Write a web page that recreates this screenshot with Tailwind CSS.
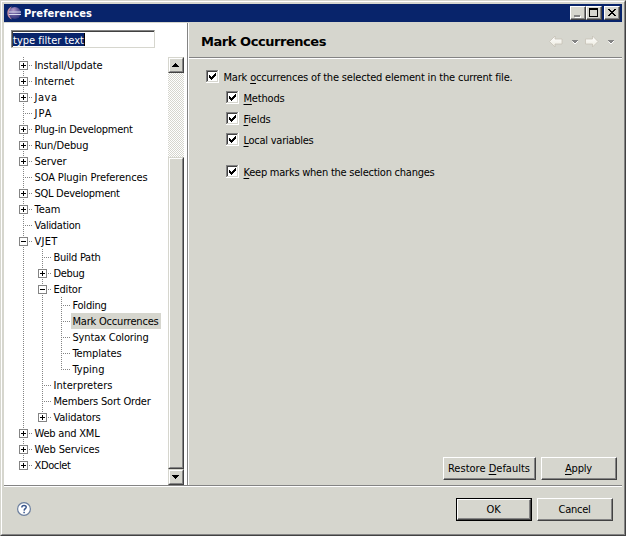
<!DOCTYPE html>
<html lang="en">
<head>
<meta charset="utf-8">
<title>Preferences</title>
<script src="https://cdn.jsdelivr.net/npm/@tailwindcss/browser@4"></script>
</head>
<body class="overflow-hidden">
<div class="w-[626px] h-[536px] border border-t-[#d6d6ce] border-l-[#d6d6ce] border-r-[#424242] border-b-[#424242] bg-[#d6d6ce] font-['DejaVu_Sans_Condensed','DejaVu_Sans',sans-serif] [font-stretch:condensed] text-[11px] leading-4 text-black whitespace-nowrap">
<div class="h-full border border-t-white border-l-white border-r-[#848484] border-b-[#848484] p-[2px] flex flex-col">

  <header class="h-[18px] shrink-0 bg-[#08246b] text-white flex items-center pl-[3px] pr-[2px]">
    <svg class="w-[14px] h-[14px] mr-[3px] shrink-0" viewBox="0 0 14 14">
      <defs><radialGradient id="orb" cx=".38" cy=".25" r=".8"><stop offset="0" stop-color="#b39cc8"/><stop offset=".45" stop-color="#6c609f"/><stop offset="1" stop-color="#2c2f78"/></radialGradient></defs>
      <path d="M5 .5C2 1.500.3 4 .3 7S2 12.500 5 13.500C3.400 11.500 2.700 9.500 2.700 7S3.400 2.500 5 .5Z" fill="#c98f9f"/>
      <circle cx="7.800" cy="7" r="6.100" fill="url(#orb)"/>
      <path d="M1.800 6h12.200M1.800 8.500h12.200" stroke="#d9dcf0" stroke-width="1"/>
    </svg>
    <span class="font-bold pt-px" data-w="68" data-font="bold 11px 'DejaVu Sans Condensed'">Preferences</span>
    <div class="ml-auto flex">
      <div class="w-4 h-[14px] bg-[#d6d6ce] border border-t-white border-l-white border-r-[#424242] border-b-[#424242]"><svg class="w-[14px] h-3 block" viewBox="0 0 14 12" shape-rendering="crispEdges"><path d="M13.500 0v11.500H0" fill="none" stroke="#848484"/><path d="M4 9h6v2H4z" fill="#fff"/><path d="M3 8h6v2H3z" fill="#848484"/></svg></div>
      <div class="w-4 h-[14px] bg-[#d6d6ce] border border-t-white border-l-white border-r-[#424242] border-b-[#424242]"><svg class="w-[14px] h-3 block" viewBox="0 0 14 12" shape-rendering="crispEdges"><path d="M13.500 0v11.500H0" fill="none" stroke="#848484"/><path d="M2 1h9v9H2zM3 3v6h7V3z" fill="#000" fill-rule="evenodd"/></svg></div>
      <div class="ml-[2px] w-4 h-[14px] bg-[#d6d6ce] border border-t-white border-l-white border-r-[#424242] border-b-[#424242]"><svg class="w-[14px] h-3 block" viewBox="0 0 14 12" shape-rendering="crispEdges"><path d="M13.500 0v11.500H0" fill="none" stroke="#848484"/><path d="M3 2h2v1h1v1h2V3h1V2h2v1h-1v1H9v1H8v1h1v1h1v1h1v1H9V8H8V7H6v1H5v1H3V8h1V7h1V6h1V5H5V4H4V3H3z" fill="#000"/></svg></div>
    </div>
  </header>

  <main class="mt-px h-[462px] shrink-0 flex">
    <aside class="w-[183px] bg-white pl-[7px] pt-[7px] flex flex-col shrink-0">
      <div class="w-[144px] h-[18px] shrink-0 border border-t-[#848484] border-l-[#848484] border-r-[#d6d6ce] border-b-[#d6d6ce]">
        <div class="h-full border-t border-l border-[#424242] pt-px flex">
          <div class="h-[13px] w-[72px] bg-[#08246b] border-r border-black text-white leading-[15px]"><span data-w="71">type filter text</span></div>
        </div>
      </div>
      <div class="mt-[9px] flex h-[428px]">
        <div id="tree" class="w-[157px]"></div>
        <div class="w-4 flex flex-col bg-[#ebebe7] bg-[repeating-conic-gradient(#d6d6ce_0_25%,#ffffff_0_50%)] bg-[length:2px_2px]">
          <div class="h-4 bg-[#d6d6ce] border border-t-[#d6d6ce] border-l-[#d6d6ce] border-r-[#424242] border-b-[#424242]"><div class="h-full border border-t-white border-l-white border-r-[#848484] border-b-[#848484]"><svg class="w-3 h-3 block" viewBox="0 0 12 12" shape-rendering="crispEdges"><path d="M5 4h1v1h1v1h1v1h1v1H2V7h1V6h1V5h1z"/></svg></div></div>
          <div class="mt-[84px] h-[312px] bg-[#d6d6ce] border border-t-[#d6d6ce] border-l-[#d6d6ce] border-r-[#424242] border-b-[#424242]"><div class="h-full border border-t-white border-l-white border-r-[#848484] border-b-[#848484]"></div></div>
          <div class="h-4 bg-[#d6d6ce] border border-t-[#d6d6ce] border-l-[#d6d6ce] border-r-[#424242] border-b-[#424242]"><div class="h-full border border-t-white border-l-white border-r-[#848484] border-b-[#848484]"><svg class="w-3 h-3 block" viewBox="0 0 12 12" shape-rendering="crispEdges"><path d="M2 4h7v1H8v1H7v1H6v1H5V7H4V6H3V5H2z"/></svg></div></div>
        </div>
      </div>
    </aside>
    <div class="w-[2px] shrink-0 bg-[#848484] border-r border-white"></div>

    <section class="flex-1 flex flex-col">
      <div class="h-[35px] shrink-0 border-b border-[#848484] flex items-center pl-[12px] pr-[8px]">
        <h1 class="font-bold text-[13px] font-['DejaVu_Sans',sans-serif] [font-stretch:normal] pt-[3px]" data-w="125" data-font="bold 13px 'DejaVu Sans'">Mark Occurrences</h1>
        <svg class="ml-auto w-[66px] h-[14px] mt-1" viewBox="0 0 66 14">
          <defs><linearGradient id="pale" x2="0" y2="1"><stop stop-color="#fff"/><stop offset="1" stop-color="#eceade"/></linearGradient></defs>
          <path d="M1.500 6.500 7 1v3h7v5H7v3z" fill="url(#pale)" stroke="#c6c2b6" stroke-width=".8"/>
          <path d="M25 6h5v1h-1v1h-1v1h-2V8h-1V7h-1z" fill="#fff"/>
          <path d="M24 5h6v1h-1v1h-1v1h-2V7h-1V6h-1z" fill="#848484"/>
          <path d="M50 6.500 44.500 1v3h-7v5h7v3z" fill="url(#pale)" stroke="#c6c2b6" stroke-width=".8"/>
          <path d="M61 6h5v1h-1v1h-1v1h-2V8h-1V7h-1z" fill="#fff"/>
          <path d="M60 5h6v1h-1v1h-1v1h-2V7h-1V6h-1z" fill="#848484"/>
        </svg>
      </div>
      <div class="border-t border-white pt-[11px] pl-[17px] flex-1 flex flex-col">
        <div id="checks"></div>
        <div class="mt-auto mb-[5px] mr-[5px] flex justify-end gap-[5px]">
          <button class="w-[93px] h-[23px] border border-t-white border-l-white border-r-[#424242] border-b-[#424242]"><span class="h-full border-r border-b border-[#848484] flex items-center justify-center pt-px"><span data-w="82">Restore <u class="underline-offset-2">D</u>efaults</span></span></button>
          <button class="w-[76px] h-[23px] border border-t-white border-l-white border-r-[#424242] border-b-[#424242]"><span class="h-full border-r border-b border-[#848484] flex items-center justify-center pt-px"><span data-w="27"><u class="underline-offset-2">A</u>pply</span></span></button>
        </div>
      </div>
    </section>
  </main>

  <footer class="flex-1 border-t border-[#848484]">
    <div class="h-full border-t border-white flex items-start pt-[11px] pl-[13px] pr-[9px]">
      <svg class="w-[14px] h-[14px] mt-[4px]" viewBox="0 0 14 14"><circle cx="7" cy="7" r="6.400" fill="#fff" stroke="#6b7f9e" stroke-width="1.200"/><path d="M4.800 5.500C4.800 2.700 9.300 2.800 9.200 5.200 9.100 6.700 7.200 6.700 7.100 8.600M7.100 9.800v1.500" fill="none" stroke="#39568c" stroke-width="1.500"/></svg>
      <div class="ml-auto flex gap-[5px]">
        <button class="w-[76px] h-[23px] border border-black"><span class="h-full border border-t-white border-l-white border-r-[#424242] border-b-[#424242] block"><span class="h-full border-r border-b border-[#848484] flex items-center justify-center pt-px"><span data-w="14">OK</span></span></span></button>
        <button class="w-[76px] h-[23px] border border-t-white border-l-white border-r-[#424242] border-b-[#424242]"><span class="h-full border-r border-b border-[#848484] flex items-center justify-center pt-px"><span data-w="32">Cancel</span></span></button>
      </div>
    </div>
  </footer>
</div>
</div>
<script>
// level, marker (+ collapsed, - expanded, blank leaf), label, label width
const nodes = [
  [0,'+','Install/Update',68],[0,'+','Internet',40],[0,'+','Java',23],[0,' ','JPA',18],
  [0,'+','Plug-in Development',98],[0,'+','Run/Debug',54],[0,'+','Server',32],
  [0,' ','SOA Plugin Preferences',113],[0,'+','SQL Development',85],[0,'+','Team',26],
  [0,' ','Validation',46],[0,'-','VJET',23],[1,' ','Build Path',47],[1,'+','Debug',31],
  [1,'-','Editor',28],[2,' ','Folding',34],[2,' ','Mark Occurrences',86],[2,' ','Syntax Coloring',76],
  [2,' ','Templates',49],[2,' ','Typing',32],[1,' ','Interpreters',59],[1,' ','Members Sort Order',97],
  [1,'+','Validators',47],[0,'+','Web and XML',65],[0,'+','Web Services',65],[0,'+','XDoclet',36]];
document.getElementById('tree').innerHTML = nodes.map(([level, mark, label, w], i) => {
  let dots = '';
  for (let l = 0; l <= level; l++) {
    const x = 12 + 19 * l;
    let more = false;
    for (let j = i + 1; j < nodes.length && nodes[j][0] >= l; j++) if (nodes[j][0] === l) { more = true; break; }
    if (l < level && !more) continue;
    dots += `<path d="M${x}.5 0V${more ? 16 : 9}"/>`;
  }
  const c = 12 + 19 * level, end = c + 9;
  dots += `<path d="M${c} 8.500H${end}"/>`;
  const box = mark === ' ' ? '' : `<path d="M${c-3.5} 4.500h8v8h-8z" fill="#fff" stroke="#848484" stroke-dasharray="none"/><path d="M${c-2} 8.500h5${mark === '+' ? `M${c}.5 6v5` : ''}" stroke="#000" stroke-dasharray="none"/>`;
  return `<div class="h-4 flex"><svg class="h-4 shrink-0" style="width:${end}px" shape-rendering="crispEdges" fill="none" stroke="#848484" stroke-dasharray="1 1">${dots}${box}</svg><span class="${i === 16 ? 'bg-[#d6d6ce] pl-[1.5px] w-[90px] ml-px pt-px' : 'pl-[1.5px] ml-px pt-px'}"><span data-w="${w}">${label}</span></span></div>`;
}).join('');

const checks = [
  ['h-[21px]','Mark <u class="underline-offset-2">o</u>ccurrences of the selected element in the current file.',289],
  ['h-[21px] pl-5','<u class="underline-offset-2">M</u>ethods',41],
  ['h-[21px] pl-5','<u class="underline-offset-2">F</u>ields',27],
  ['h-[32px] pl-5','<u class="underline-offset-2">L</u>ocal variables',70],
  ['h-[21px] pl-5','<u class="underline-offset-2">K</u>eep marks when the selection changes',191]];
document.getElementById('checks').innerHTML = checks.map(([cls, label, w]) =>
  `<div class="flex items-start ${cls}"><svg class="w-[13px] h-[13px] mr-[4.5px] shrink-0" viewBox="0 0 13 13" shape-rendering="crispEdges"><path d="M0 0h13v13H0z" fill="#fff"/><path d="M.5 12V.5H12" fill="none" stroke="#848484"/><path d="M1.500 11V1.500H11" fill="none" stroke="#424242"/><path d="M1 11.500h10.500V1" fill="none" stroke="#d6d6ce"/><path d="M3 5h1v1h1v1h1V6h1V5h1V4h1V3h1v3H9v1H8v1H7v1H6v1H5V9H4V8H3z"/></svg><span data-w="${w}">${label}</span></div>`).join('');

// Letter spacing brings each label to its nominal width
const ctx = document.createElement('canvas').getContext('2d');
document.querySelectorAll('[data-w]').forEach(el => {
  ctx.font = el.dataset.font || "11px 'DejaVu Sans Condensed'";
  const text = el.textContent;
  el.style.letterSpacing = ((+el.dataset.w - ctx.measureText(text).width) / text.length) + 'px';
});
</script>
</body>
</html>
